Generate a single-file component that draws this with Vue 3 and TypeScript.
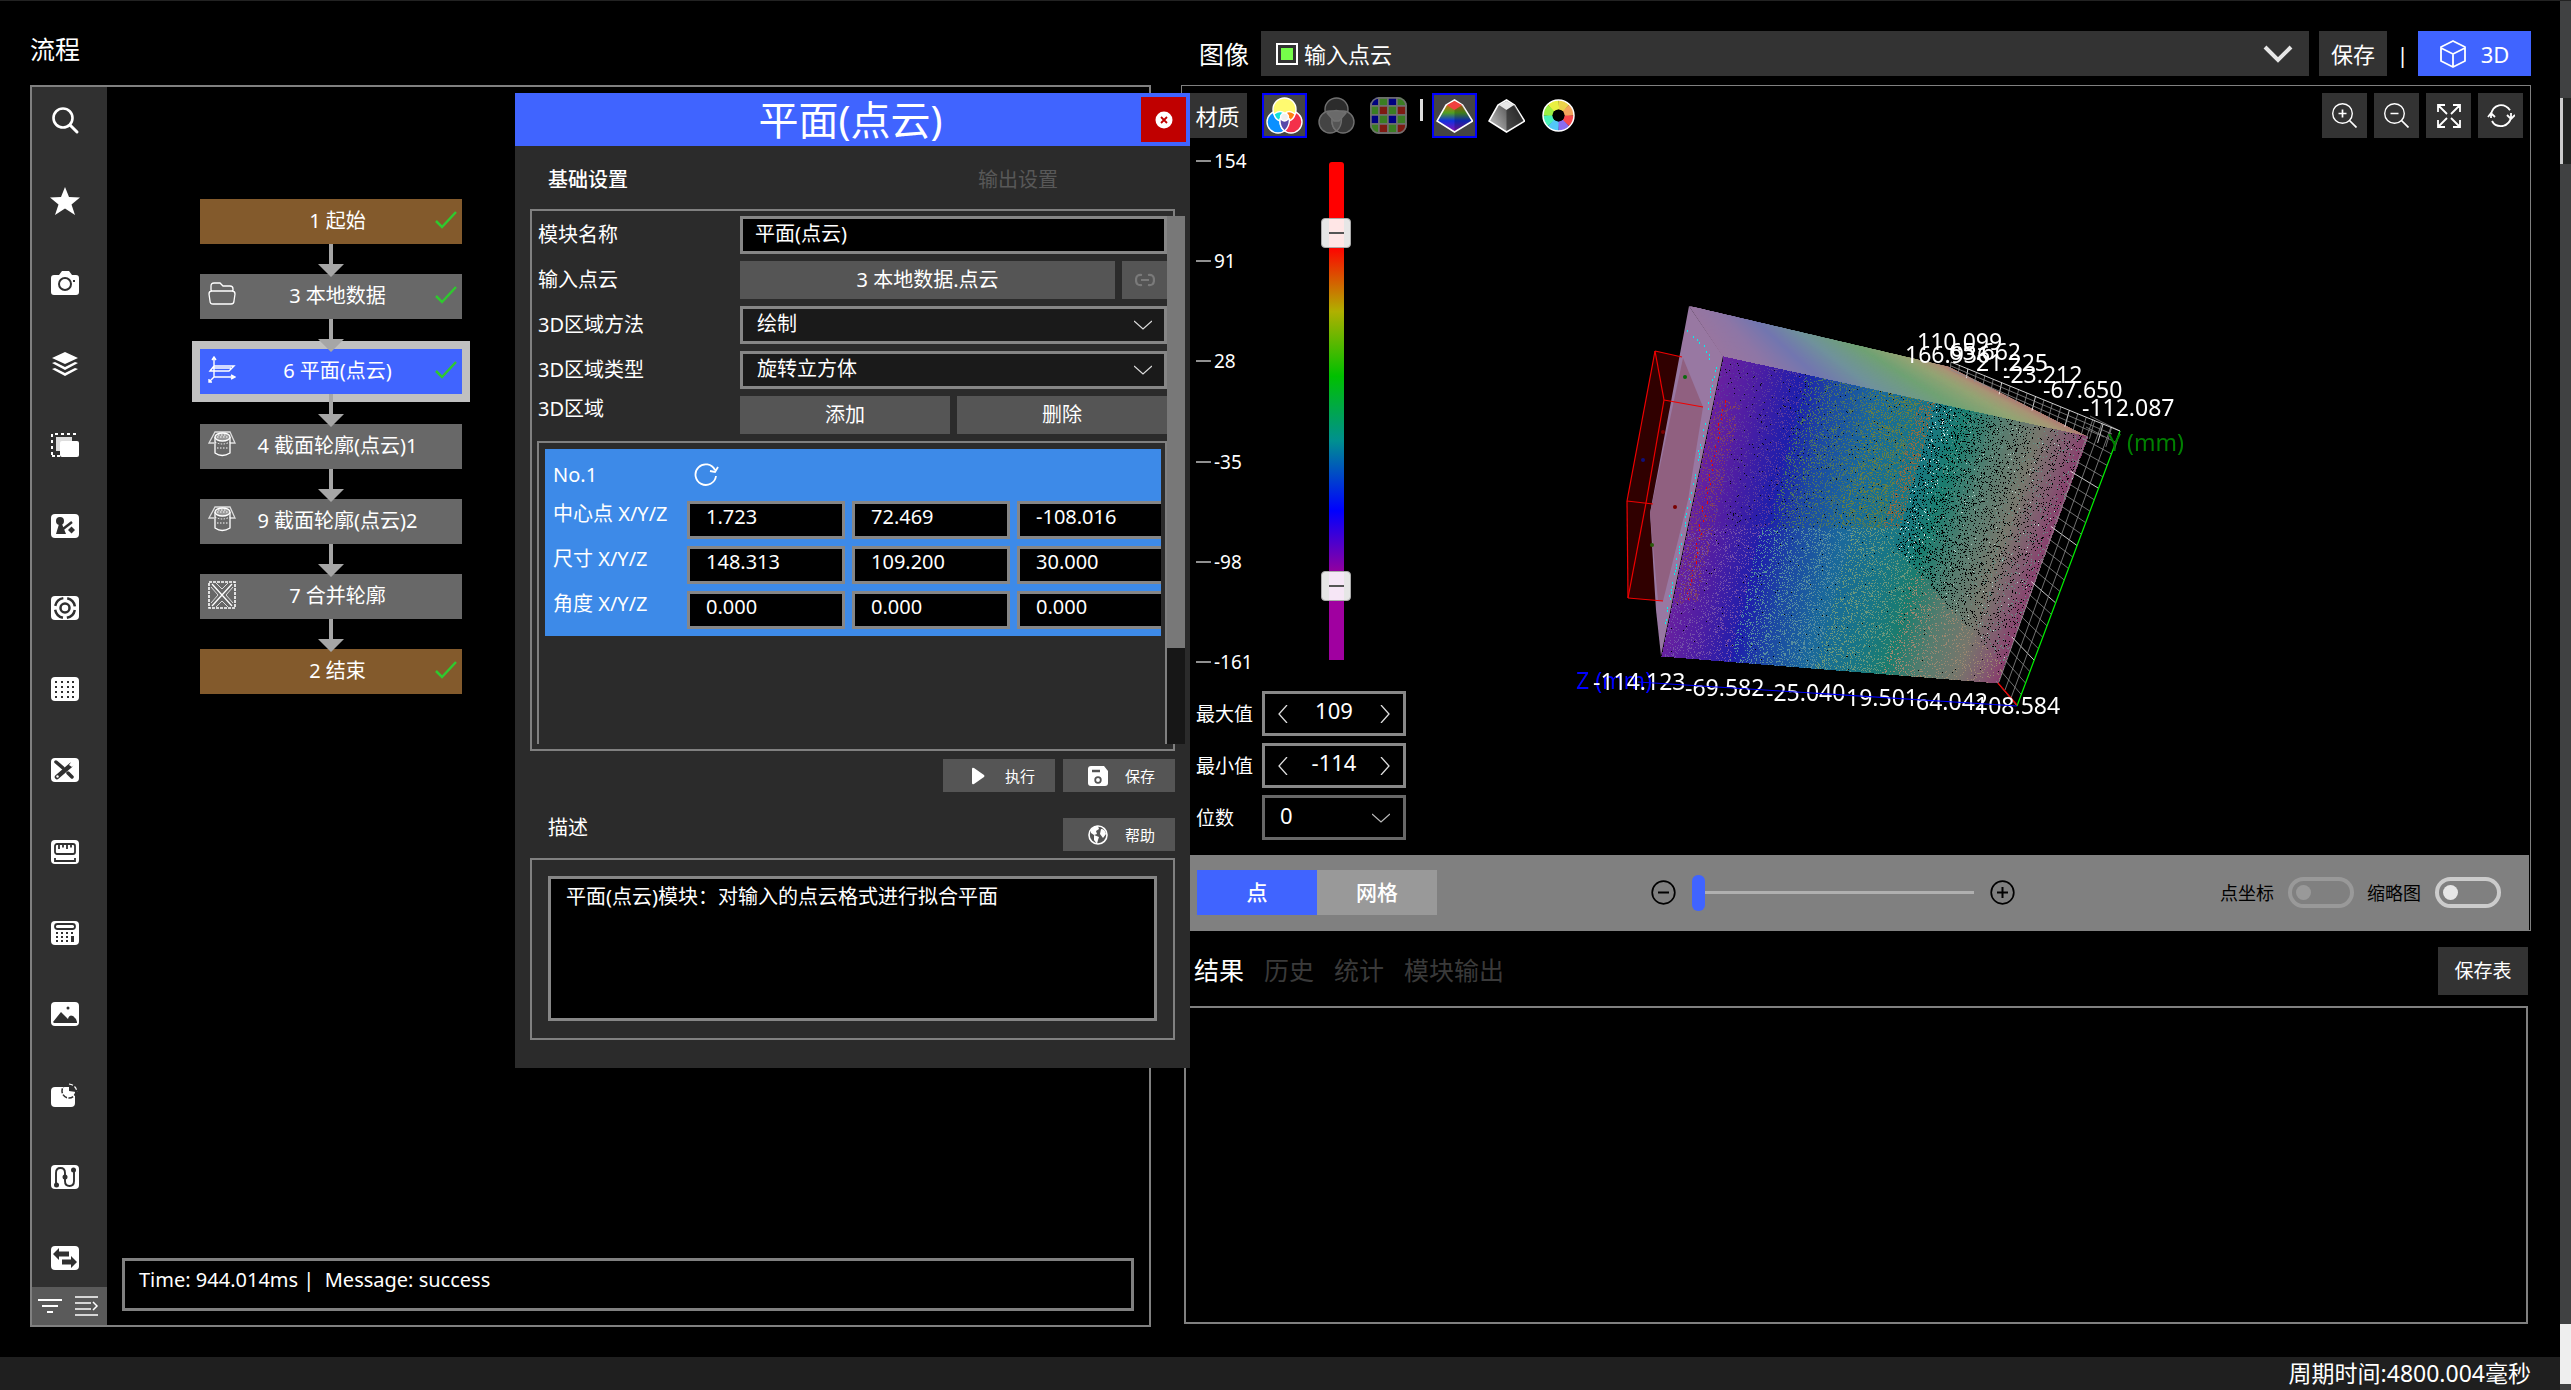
<script setup lang="ts">
import { onMounted, ref } from 'vue'

interface FlowNode {
  label: string
  kind: 'edge' | 'step'
  icon?: 'folder' | 'plane' | 'section' | 'merge'
  done: boolean
  active?: boolean
}

const nodes: FlowNode[] = [
  { label: '1 起始', kind: 'edge', done: true },
  { label: '3 本地数据', kind: 'step', icon: 'folder', done: true },
  { label: '6 平面(点云)', kind: 'step', icon: 'plane', done: true, active: true },
  { label: '4 截面轮廓(点云)1', kind: 'step', icon: 'section', done: false },
  { label: '9 截面轮廓(点云)2', kind: 'step', icon: 'section', done: false },
  { label: '7 合并轮廓', kind: 'step', icon: 'merge', done: false },
  { label: '2 结束', kind: 'edge', done: true },
]

const nodeIcons: Record<string, string> = {
  folder:
    '<path d="M3 10V5q0-3 3-3h6l3 3h7q3 0 3 3v2M4 10h20q3 0 3 3l-1 7q0 3-3 3H5q-3 0-3-3l-1-7q0-3 3-3z" fill="none" stroke="#fff" stroke-width="1.3"/>',
  plane:
    '<path d="M6 1v20h20M6 21l-5 5M4 4l2-3 2 3M23 19l4 2-4 2M1 23v3h3M2 15l4-5h20l-5 5zM4 12h19" fill="none" stroke="#fff" stroke-width="1.4"/>',
  section:
    '<path d="M6 12H1L7 1h15l5 11h-5" fill="none" stroke="#ddd" stroke-width="1.3"/><path d="M7 6v16q7 5 15 0V6" fill="none" stroke="#fff" stroke-width="1.3"/><ellipse cx="14.500" cy="6" rx="7.500" ry="4" fill="#999" stroke="#fff" stroke-width="1.3"/><path d="M9 6h12M10 4h9M7 11q7 4 15 0M9 17h11" fill="none" stroke="#fff" stroke-width="1" stroke-dasharray="1.500 1.500"/>',
  merge:
    '<path d="M1 1h26v26H1z" fill="none" stroke="#fff" stroke-width="1.6" stroke-dasharray="3 1"/><path d="M4 3l20 22M24 3L4 25" fill="none" stroke="#fff" stroke-width="1.3"/><path d="M3 6l7 8-7 8M25 6l-7 8 7 8M8 2l6 6 6-6M8 26l6-6 6 6" fill="none" stroke="#ddd" stroke-width="1"/>',
}

const card = '<rect x="0" y="0" width="28" height="24" rx="4" fill="#fff"/>'
const dots = (xs: number[], ys: number[], size = 2) =>
  ys.map((y) => xs.map((x) => `<rect x="${x}" y="${y}" width="${size}" height="${size}" fill="#303030"/>`).join('')).join('')

const tools: { name: string; art: string }[] = [
  { name: '搜索', art: '<ellipse cx="12" cy="10" rx="9.500" ry="9.500" fill="none" stroke="#fff" stroke-width="2.600"/><path d="M19 17l7 7" stroke="#fff" stroke-width="3" stroke-linecap="round"/>' },
  { name: '收藏', art: '<path d="M14-2l4 10 11 .5-8.500 7L24 26l-10-6.500L4 26l3.500-10.500L-1 8.500 10 8z" fill="#fff"/>' },
  { name: '相机', art: '<path d="M3 4h5l3-4h7l3 4h4q3 0 3 3v14q0 3-3 3H3q-3 0-3-3V7q0-3 3-3z" fill="#fff"/><circle cx="14" cy="13" r="6" fill="none" stroke="#303030" stroke-width="2"/><rect x="22" y="9" width="2" height="2" fill="#303030"/>' },
  { name: '图层', art: '<path d="M14 0l13 6-13 6L1 6zM1 11l3-1 10 5 10-5 3 1-13 7zM1 17l3-1 10 5 10-5 3 1-13 7z" fill="#fff"/>' },
  { name: '区域', art: '<path d="M1 22V1h26" fill="none" stroke="#fff" stroke-width="2" stroke-dasharray="3 3"/><path d="M1 23h8" stroke="#fff" stroke-width="2" stroke-dasharray="3 2"/><rect x="5" y="4" width="16" height="14" fill="#ddd"/><rect x="9" y="8" width="19" height="16" rx="2" fill="#fff"/>' },
  { name: '标记', art: card + '<circle cx="9" cy="7" r="4" fill="#303030"/><path d="M12 15l9-7" fill="none" stroke="#303030" stroke-width="2.500"/><path d="M5 20l3-10h3l4 10z" fill="#303030"/><path d="M20.500 12.500l3.500 3.500-3.500 3.500L17 16z" fill="#303030"/>' },
  { name: '定位', art: card + '<circle cx="14" cy="12" r="4.500" fill="none" stroke="#303030" stroke-width="2.500"/><circle cx="14" cy="12" r="10" fill="none" stroke="#303030" stroke-width="2.500" stroke-dasharray="11.700 4" stroke-dashoffset="-2"/>' },
  { name: '点阵', art: card + dots([4, 10, 16, 21], [4, 9, 14, 19]) },
  { name: '工具', art: card + '<path d="M5 4l7 6M17 15l4 4" stroke="#303030" stroke-width="3.500" stroke-linecap="round"/><path d="M6 19L20 7" stroke="#303030" stroke-width="4.500" stroke-linecap="round"/><path d="M21 3l-3 4 3 2 4-3" fill="#fff"/><circle cx="6.500" cy="18.500" r="1.200" fill="#fff"/>' },
  { name: '测量', art: card + '<rect x="4" y="4" width="20" height="10" rx="2" fill="none" stroke="#303030" stroke-width="1.800"/><path d="M8 4v5M12 4v3.500M16 4v5M20 4v3.500M4 18v3h20v-3" fill="none" stroke="#303030" stroke-width="1.800"/>' },
  { name: '计算', art: card + '<rect x="4" y="3" width="20" height="5" rx="2.500" fill="none" stroke="#303030" stroke-width="1.800"/>' + dots([5, 10, 15, 20], [11, 15, 19]) + '<rect x="20" y="15" width="3" height="6" fill="#303030"/>' },
  { name: '图片', art: card + '<path d="M2 20l8-10 7 7q1-5 5-3 3 2 4 6v1H3z" fill="#303030"/><circle cx="17" cy="6" r="1.500" fill="#303030"/>' },
  { name: '统计', art: '<rect x="0" y="4" width="24" height="20" rx="4" fill="#fff"/><circle cx="18" cy="8" r="7" fill="none" stroke="#303030" stroke-width="1.500" stroke-dasharray="5 1.500"/><path d="M18 8V2q6 0 7 7z" fill="#303030"/><path d="M18 1q7 1 8 8" fill="none" stroke="#fff" stroke-width="1.200" stroke-dasharray="4 2"/>' },
  { name: '流程', art: card + '<path d="M5 20V8q0-5 4.500-5T14 8v8q0 5 4.500 5T23 16V5" fill="none" stroke="#303030" stroke-width="1.900"/><circle cx="5.500" cy="20" r="2.500" fill="#303030"/><circle cx="14" cy="12" r="2.500" fill="#303030"/><circle cx="22.500" cy="5" r="2.500" fill="#303030"/>' },
  { name: '通信', art: card + '<path d="M2 8l6-6v3.500h10v5H8V14zM26 16l-6-6v3.500H11v5h9V22z" fill="#303030"/>' },
]

const moduleName = ref('平面(点云)')
const regionRows = [
  { label: '中心点 X/Y/Z', values: ['1.723', '72.469', '-108.016'] },
  { label: '尺寸 X/Y/Z', values: ['148.313', '109.200', '30.000'] },
  { label: '角度 X/Y/Z', values: ['0.000', '0.000', '0.000'] },
]
const description = ref('平面(点云)模块：对输入的点云格式进行拟合平面')

const ticks = [154, 91, 28, -35, -98, -161]
const maxValue = ref(109)
const minValue = ref(-114)

/* --- 3D scene ------------------------------------------------------- */
type Stop = [number, number, number, number]
const faceStops: Stop[] = [
  [0, 104, 32, 160], [0.1, 76, 30, 164], [0.21, 30, 30, 172], [0.3, 28, 72, 164],
  [0.42, 26, 104, 156], [0.56, 24, 118, 134], [0.66, 26, 124, 110], [0.76, 84, 124, 110],
  [0.87, 118, 118, 108], [0.95, 130, 88, 112], [1, 136, 60, 108],
]
const topStops: Stop[] = [
  [0, 152, 118, 160], [0.12, 142, 118, 166], [0.26, 114, 118, 176], [0.42, 112, 146, 156],
  [0.64, 112, 162, 116], [0.82, 148, 164, 116], [0.93, 168, 150, 118], [1, 176, 124, 116],
]

function pick(stops: Stop[], t: number): number[] {
  const c = Math.min(1, Math.max(0, t))
  let i = 1
  while (i < stops.length - 1 && stops[i][0] < c) i++
  const a = stops[i - 1]
  const b = stops[i]
  const k = (c - a[0]) / (b[0] - a[0])
  return [1, 2, 3].map((n) => Math.round(a[n] + (b[n] - a[n]) * k))
}

let seed = 7
function random(): number {
  seed = (seed * 1664525 + 1013904223) % 4294967296
  return seed / 4294967296
}

const cloud = ref<HTMLCanvasElement | null>(null)

function drawCloud(g: CanvasRenderingContext2D) {
  const lerp = (a: number, b: number, t: number) => a + (b - a) * t
  const poly = (pts: number[][], fill: string) => {
    g.fillStyle = fill
    g.beginPath()
    pts.forEach(([x, y], i) => (i ? g.lineTo(x, y) : g.moveTo(x, y)))
    g.closePath()
    g.fill()
  }
  poly([[95, 71], [122, 77], [90, 233], [98, 321], [68, 318], [67, 221]], '#300000')
  poly([[129, 26], [163, 76], [101, 376], [96, 330], [90, 233]], '#9878a2')
  poly([[123, 78], [143, 127], [128, 220], [103, 321], [98, 321], [90, 233]], '#906080')
  for (let i = 0; i < 260; i++) {
    const u = i / 260
    const w = Math.min(1, (i + 6) / 260)
    poly(
      [
        [lerp(129, 389, u), lerp(26, 87, u)], [lerp(129, 389, w), lerp(26, 87, w)],
        [lerp(163, 528, w), lerp(77, 157, w)], [lerp(163, 528, u), lerp(77, 157, u)],
      ],
      `rgb(${pick(topStops, u)})`,
    )
  }
  for (let y = 76; y < 404; y++) {
    const left = lerp(163, 101, (y - 76) / 300)
    const right = lerp(528, 438, (y - 156) / 247)
    for (let x = Math.ceil(left); x < right; x++) {
      if (y < 76 + ((x - 163) * 80) / 365) continue
      if (y > 376 + ((x - 101) * 27) / 337) continue
      const u = (x - left) / (right - left)
      let c = pick(faceStops, u)
      const r = random()
      const seam = 375 - (y - 123) * 0.28
      const lowLimit = 267 + (x - 335) * 1.1
      if (x > seam && y < lowLimit) {
        const d = 0.14 - 0.09 * Math.max(0, (u - 0.72) / 0.28)
        if (r < d) c = [0, 0, 0]
        else if (x < seam + 26 && r > 0.975) c = [230, 240, 240]
        else if (r > 0.996) c = [190, 220, 210]
        else if (r > 0.96) c = [100, 146, 134]
      } else if (y < 248) {
        const d = 0.05 + 0.26 * Math.min(1, u * 2)
        if (r < d) c = u < 0.22 ? [92, 60, 156] : u < 0.4 ? [78, 118, 96] : u < 0.53 ? [100, 126, 70] : [142, 108, 66]
        else if (r > 0.988) c = [8, 10, 20]
      } else {
        const d = 0.22 * Math.max(0.25, 1 - Math.abs(u - 0.42))
        if (r < d) c = u < 0.2 ? [116, 80, 168] : u < 0.45 ? [88, 142, 158] : u < 0.65 ? [108, 152, 124] : [156, 136, 112]
        else if (r > 0.997) c = [0, 0, 0]
      }
      if (u < 0.07 && y > 120 && y < 324 && r > 0.82) c = [130, 66, 96]
      g.fillStyle = `rgb(${c})`
      g.fillRect(x, y, 1, 1)
    }
  }
  const path = [[126, 50], [142, 65], [154, 87], [145, 137], [120, 260], [102, 348]]
  g.fillStyle = '#00f0f0'
  for (let i = 1; i < path.length; i++) {
    const steps = Math.round(Math.abs(path[i][1] - path[i - 1][1]) / 3)
    for (let k = 0; k < steps; k++) {
      if (random() < 0.6) g.fillRect(Math.round(lerp(path[i - 1][0], path[i][0], k / steps) + random() * 2), Math.round(lerp(path[i - 1][1], path[i][1], k / steps)), 1, 2)
    }
  }
  g.fillStyle = '#f00000'
  for (let k = 0; k < 44; k++) {
    const y = 120 + k * 4.6
    g.fillRect(Math.round(162 - k * 0.85 + random() * 4), Math.round(y), 1, 1 + Math.round(random() * 2))
  }
}

onMounted(() => {
  const g = cloud.value?.getContext('2d')
  if (g) drawCloud(g)
})

interface Line { x1: number; y1: number; x2: number; y2: number; c: string }
const gridLines: Line[] = []
for (let i = 0; i <= 24; i++) {
  const t = i / 24
  const x = 560 - 103 * t
  const y = 151 + 275 * t
  gridLines.push({ x1: x, y1: y, x2: x - 30 + 9 * t, y2: y - 15 - 10 * t, c: i % 5 === 0 && i > 0 ? '#fff' : '#8c8c8c' })
}
for (let k = 1; k <= 3; k++) {
  gridLines.push({ x1: 560 - 9 * k, y1: 151 - 4 * k, x2: 457 - 6 * k, y2: 426 - 8 * k, c: '#8c8c8c' })
}
for (let i = 0; i <= 20; i++) {
  const t = i / 20
  const x = 391 + 169 * t
  const y = 82 + 69 * t
  gridLines.push({ x1: x, y1: y, x2: x - 1 - 5 * t, y2: y + 8 + 12 * t, c: i % 4 === 2 ? '#fff' : '#8c8c8c' })
}
for (let k = 0; k <= 2; k++) {
  gridLines.push({ x1: 391, y1: 82 + 4 * k, x2: 560 - 8 * k, y2: 151 + 3 * k, c: k ? '#8c8c8c' : '#fff' })
}

const redLines = [
  '95,71 122,77', '95,71 104,120', '104,120 143,127', '95,71 67,221', '104,120 86,223',
  '67,221 93,224', '67,221 68,318', '86,223 68,318', '68,318 103,321',
]

const axisLabels = [
  { t: 'Z (mm)', x: 16, y: 409, c: '#0000ff' },
  { t: 'Y (mm)', x: 548, y: 171, c: '#008000' },
  { t: '110.099', x: 357, y: 70, c: '#fff' },
  { t: '166.936', x: 345, y: 83, c: '#fff' },
  { t: '65.662', x: 389, y: 80, c: '#fff' },
  { t: '21.225', x: 416, y: 91, c: '#fff' },
  { t: '-23.212', x: 443, y: 103, c: '#fff' },
  { t: '-67.650', x: 483, y: 118, c: '#fff' },
  { t: '-112.087', x: 522, y: 136, c: '#fff' },
  { t: '-114.123', x: 33, y: 410, c: '#fff' },
  { t: '-69.582', x: 125, y: 416, c: '#fff' },
  { t: '-25.040', x: 206, y: 421, c: '#fff' },
  { t: '19.501', x: 286, y: 426, c: '#fff' },
  { t: '64.042', x: 356, y: 430, c: '#fff' },
  { t: '108.584', x: 415, y: 434, c: '#fff' },
]

const gridColors = ['#000080', '#3b7d23', '#000080', '#3b7d23', '#3b7d23', '#7d1a12', '#3b7d23', '#7d1a12']
const checker = Array.from({ length: 16 }, (_, i) => ({
  x: (i % 4) * 9,
  y: Math.floor(i / 4) * 9,
  c: gridColors[(Math.floor(i / 4) % 2) * 4 + (i % 4)],
}))
const blades = ['#ecd24a', '#f4a55c', '#f8484c', '#8a6cf0', '#52c8f8', '#48f0b8', '#9cf044', '#e8f040']
</script>

<template>
  <div class="app">
    <main class="workspace">
      <section class="flow-col">
        <h2 class="flow-title">流程</h2>
        <div class="flow-panel">
          <nav class="sidebar">
            <div class="tool-list">
              <button v-for="t in tools" :key="t.name" class="tool" type="button" :aria-label="t.name">
                <svg width="28" height="24" viewBox="0 0 28 24" overflow="visible" v-html="t.art"></svg>
              </button>
            </div>
            <div class="side-foot">
              <button type="button" aria-label="筛选">
                <svg width="24" height="20" viewBox="0 0 24 20"><path d="M0 4h24M4 10h16M9 16h6" stroke="#fff" stroke-width="2" /></svg>
              </button>
              <button type="button" aria-label="展开列表">
                <svg width="24" height="20" viewBox="0 0 24 20"><path d="M0 1h23M0 7h16M0 13h16M0 19h23M18 6l4 4-4 4" fill="none" stroke="#fff" stroke-width="1.5" /></svg>
              </button>
            </div>
          </nav>
          <div class="flow-main">
            <ol class="flow-nodes">
              <li v-for="(n, i) in nodes" :key="n.label" class="flow-item">
                <button type="button" class="node" :class="[n.kind, { active: n.active }]">
                  <svg v-if="n.icon" class="node-icon" width="28" height="28" viewBox="0 0 28 28" v-html="nodeIcons[n.icon]"></svg>
                  <span v-else class="node-icon"></span>
                  <span class="node-label">{{ n.label }}</span>
                  <svg class="node-check" width="22" height="20" viewBox="0 0 22 20">
                    <path v-if="n.done" d="M1 11l6 6L21 2" fill="none" stroke="#2fc92f" stroke-width="2.5" />
                  </svg>
                </button>
                <svg v-if="i < nodes.length - 1" class="arrow" width="26" height="33" viewBox="0 0 26 33">
                  <path d="M11 0h4v20h11L13 33 0 20h11z" fill="#a6a6a6" />
                </svg>
              </li>
            </ol>
            <p class="message">Time: 944.014ms |&nbsp; Message: success</p>
          </div>
        </div>
      </section>

      <section class="view-col">
        <header class="view-head">
          <label class="head-label" for="image-source">图像</label>
          <div class="source">
            <span class="swatch"></span>
            <select id="image-source"><option>输入点云</option></select>
            <svg class="source-arrow" width="30" height="18" viewBox="0 0 30 18"><path d="M2 2l13 13L28 2" fill="none" stroke="#e6e6e6" stroke-width="4" /></svg>
          </div>
          <button type="button" class="dark-btn save">保存</button>
          <span class="bar-sep">|</span>
          <button type="button" class="mode-3d">
            <svg width="26" height="28" viewBox="0 0 26 28"><path d="M13 1l12 6v14l-12 6-12-6V7zM1 8l12 6 12-6M13 14v12" fill="none" stroke="#fff" stroke-width="1.8" stroke-linejoin="round" /></svg>
            3D
          </button>
        </header>

        <div class="viewer">
          <div class="toolbar">
            <button type="button" class="dark-btn material">材质</button>
            <div class="mat-group">
              <button type="button" class="mat on" aria-label="彩色">
                <svg width="37" height="37" viewBox="0 0 37 37">
                  <g stroke="#fff" stroke-width="1.4">
                    <circle cx="12" cy="25" r="11" fill="#0a90ff" /><circle cx="25" cy="25" r="11" fill="#f4304a" /><circle cx="18.500" cy="12.500" r="11.500" fill="#fffa70" />
                    <path d="M8 17q7-5 11 0-5 3-5 7-5-2-6-7z" fill="#10e0d8" /><path d="M29 17q-7-5-10 0 4 3 4 7 5-2 6-7z" fill="#ff8010" />
                    <path d="M14 22h9.500q0 8-5 12-5-4-4.500-12z" fill="#5848a8" /><circle cx="18.500" cy="20" r="4" fill="#f0f0f0" />
                  </g>
                </svg>
              </button>
              <button type="button" class="mat" aria-label="灰度">
                <svg width="37" height="37" viewBox="0 0 37 37">
                  <g stroke="#707070" stroke-width="1.4">
                    <circle cx="18.500" cy="12.500" r="11.500" fill="#2c2c2c" /><circle cx="12" cy="25" r="11" fill="#444" /><circle cx="25" cy="25" r="11" fill="#383838" />
                    <path d="M14 22h9.500q0 8-5 12-5-4-4.500-12z" fill="#555" /><path d="M9 16q9-5 19 0l-7 8h-5z" fill="#6a6a6a" />
                  </g>
                </svg>
              </button>
              <button type="button" class="mat" aria-label="棋盘格">
                <svg width="37" height="37" viewBox="0 0 37 37">
                  <defs><clipPath id="tile"><rect width="37" height="37" rx="9" /></clipPath></defs>
                  <g clip-path="url(#tile)"><rect v-for="c in checker" :key="c.x + '-' + c.y" :x="c.x" :y="c.y" width="9" height="9" :fill="c.c" stroke="#707070" stroke-width="1.500" /></g>
                  <rect x="1" y="1" width="35" height="35" rx="8" fill="none" stroke="#707070" stroke-width="1.500" />
                </svg>
              </button>
              <span class="mat-sep"></span>
              <button type="button" class="mat on" aria-label="高度着色">
                <svg width="37" height="34" viewBox="0 0 37 34">
                  <defs><linearGradient id="hue" x1="0" y1="0" x2="0" y2="1"><stop offset="0.1" stop-color="#e06010" /><stop offset="0.400" stop-color="#50a020" /><stop offset="0.650" stop-color="#1030e0" /><stop offset="1" stop-color="#9010b0" /></linearGradient></defs>
                  <path d="M18.500 1l8 5 10 16-18 11L1 22 10 6z" fill="url(#hue)" stroke="#fff" stroke-width="1.600" /><path d="M18.500 2l7.500 4-7.500 5-7.500-5z" fill="#f04040" /><path d="M18.500 11l8-5 9 16-17 10z" fill="#000" opacity=".22" />
                </svg>
              </button>
              <button type="button" class="mat" aria-label="灰度高度">
                <svg width="37" height="34" viewBox="0 0 37 34">
                  <defs><linearGradient id="gray" x1="1" y1="0" x2="0" y2="0.5"><stop offset="0.200" stop-color="#333" /><stop offset="1" stop-color="#aaa" /></linearGradient></defs>
                  <path d="M18.500 1l8 5 10 16-18 11L1 22 10 6z" fill="url(#gray)" stroke="#fff" stroke-width="1.600" /><path d="M18.500 2l7.500 4-7.500 5-7.500-5z" fill="#e8e8e8" /><path d="M18.500 11l8-5 9 16-17 10z" fill="#222" opacity=".6" />
                </svg>
              </button>
              <button type="button" class="mat" aria-label="色环">
                <svg width="33" height="33" viewBox="-16.500 -16.500 33 33">
                  <g><path v-for="(b, i) in blades" :key="b" d="M0-6L0-15.500A15.500 15.500 0 0 1 11-11L5-4z" :fill="b" :transform="`rotate(${i * 45})`" /></g>
                  <circle r="15.500" fill="none" stroke="#fff" stroke-width="1.500" /><circle r="6" fill="#000" />
                </svg>
              </button>
            </div>
            <div class="zoom-group">
              <button type="button" class="dark-btn sq" aria-label="放大"><svg width="25" height="25" viewBox="0 0 25 25"><path d="M17.500 17.500l7 7M6.500 10.500h8M10.500 6.500v8" stroke="#fff" stroke-width="1.700" /><circle cx="10.500" cy="10.500" r="9.800" fill="none" stroke="#fff" stroke-width="1.400" /></svg></button>
              <button type="button" class="dark-btn sq" aria-label="缩小"><svg width="25" height="25" viewBox="0 0 25 25"><path d="M17.500 17.500l7 7M6.500 10.500h8" stroke="#fff" stroke-width="1.700" /><circle cx="10.500" cy="10.500" r="9.800" fill="none" stroke="#fff" stroke-width="1.400" /></svg></button>
              <button type="button" class="dark-btn sq" aria-label="全屏"><svg width="24" height="24" viewBox="0 0 24 24"><path d="M1 8V1h7M1 1l9 9M16 1h7v7M23 1l-9 9M1 16v7h7M1 23l9-9M16 23h7v-7M23 23l-9-9" fill="none" stroke="#fff" stroke-width="1.800" /></svg></button>
              <button type="button" class="dark-btn sq" aria-label="刷新"><svg width="28" height="24" viewBox="0 0 28 24"><path d="M4 14V11Q5 3 12 1.300q7-1 11 5M24 9v4q-1 7-8 9-8 1-11-5M1 13l3-4 4 4M20 11l4 4 4-4" fill="none" stroke="#fff" stroke-width="1.800" /></svg></button>
            </div>
          </div>

          <div class="stage">
            <div class="controls">
              <div class="scale">
                <ul class="ticks">
                  <li v-for="t in ticks" :key="t"><i></i>{{ t }}</li>
                </ul>
                <div class="ramp">
                  <input v-model="maxValue" type="range" min="-161" max="154" aria-label="最大值滑块" />
                  <input v-model="minValue" type="range" min="-161" max="154" aria-label="最小值滑块" />
                </div>
              </div>
              <div class="fields">
                <div class="field">
                  <label for="max-value">最大值</label>
                  <div class="spin">
                    <button type="button" aria-label="减小最大值"><svg width="10" height="18" viewBox="0 0 10 18"><path d="M9 0L1 9l8 9" fill="none" stroke="#ddd" stroke-width="1.300" /></svg></button>
                    <input id="max-value" v-model="maxValue" type="text" />
                    <button type="button" aria-label="增大最大值"><svg width="10" height="18" viewBox="0 0 10 18"><path d="M1 0l8 9-8 9" fill="none" stroke="#ddd" stroke-width="1.300" /></svg></button>
                  </div>
                </div>
                <div class="field">
                  <label for="min-value">最小值</label>
                  <div class="spin">
                    <button type="button" aria-label="减小最小值"><svg width="10" height="18" viewBox="0 0 10 18"><path d="M9 0L1 9l8 9" fill="none" stroke="#ddd" stroke-width="1.300" /></svg></button>
                    <input id="min-value" v-model="minValue" type="text" />
                    <button type="button" aria-label="增大最小值"><svg width="10" height="18" viewBox="0 0 10 18"><path d="M1 0l8 9-8 9" fill="none" stroke="#ddd" stroke-width="1.300" /></svg></button>
                  </div>
                </div>
                <div class="field">
                  <label for="digits">位数</label>
                  <div class="spin digits">
                    <select id="digits"><option>0</option></select>
                    <svg width="18" height="10" viewBox="0 0 18 10"><path d="M0 1l9 8 9-8" fill="none" stroke="#bbb" stroke-width="1.300" /></svg>
                  </div>
                </div>
              </div>
            </div>
            <div class="scene">
              <canvas ref="cloud" width="660" height="460"></canvas>
              <svg width="660" height="460" viewBox="0 0 660 460">
                <line v-for="(l, i) in gridLines" :key="i" :x1="l.x1" :y1="l.y1" :x2="l.x2" :y2="l.y2" :stroke="l.c" stroke-width="0.800" />
                <path d="M560 151L457 426" stroke="#00f000" stroke-width="1.200" />
                <path d="M438 403l19 22" stroke="#f00000" stroke-width="1.200" />
                <polyline v-for="p in redLines" :key="p" :points="p" stroke="#f00000" stroke-width="1.200" fill="none" />
                <circle cx="125" cy="97" r="2" fill="#0a6a0a" /><circle cx="103" cy="152" r="2" fill="#7a0000" /><circle cx="83" cy="180" r="2" fill="#10107a" />
                <circle cx="115" cy="227" r="2" fill="#7a0000" /><circle cx="92" cy="265" r="2" fill="#2a5a0a" />
                <text v-for="a in axisLabels" :key="a.t" :x="a.x" :y="a.y" :fill="a.c" font-size="23">{{ a.t }}</text>
                <path d="M78 402L457 426" stroke="#0000ff" stroke-width="1.200" />
              </svg>
            </div>
          </div>

          <div class="view-bar">
            <div class="seg">
              <button type="button" class="on">点</button>
              <button type="button">网格</button>
            </div>
            <div class="size">
              <button type="button" aria-label="减小点"><svg width="25" height="25" viewBox="0 0 25 25"><circle cx="12.500" cy="12.500" r="11.300" fill="none" stroke="#000" stroke-width="1.700" /><path d="M7 12.500h11" stroke="#000" stroke-width="2" /></svg></button>
              <input type="range" min="0" max="100" value="0" aria-label="点大小" />
              <button type="button" aria-label="增大点"><svg width="25" height="25" viewBox="0 0 25 25"><circle cx="12.500" cy="12.500" r="11.300" fill="none" stroke="#000" stroke-width="1.700" /><path d="M7 12.500h11M12.500 7v11" stroke="#000" stroke-width="2" /></svg></button>
            </div>
            <div class="switches">
              <label>点坐标<input type="checkbox" role="switch" disabled /></label>
              <label>缩略图<input type="checkbox" role="switch" /></label>
            </div>
          </div>
        </div>

        <div class="result-head">
          <div class="result-tabs">
            <button type="button" class="on">结果</button>
            <button type="button">历史</button>
            <button type="button">统计</button>
            <button type="button">模块输出</button>
          </div>
          <button type="button" class="dark-btn save-table">保存表</button>
        </div>
        <div class="result-box"></div>
      </section>
    </main>

    <footer class="status">周期时间:4800.004毫秒</footer>

    <section class="dialog" role="dialog" aria-labelledby="dialog-title">
      <header class="dialog-head">
        <h1 id="dialog-title">平面(点云)</h1>
        <button type="button" aria-label="关闭">
          <svg width="18" height="18" viewBox="0 0 18 18"><circle cx="9" cy="9" r="8.500" fill="#fff" /><path d="M6 6l6 6M12 6l-6 6" stroke="#c00000" stroke-width="1.800" /></svg>
        </button>
      </header>
      <div class="dialog-tabs">
        <button type="button" class="on">基础设置</button>
        <button type="button">输出设置</button>
      </div>
      <div class="settings">
        <div class="scroll-body">
          <div class="row">
            <label for="module-name">模块名称</label>
            <input id="module-name" v-model="moduleName" type="text" class="box" />
          </div>
          <div class="row">
            <span>输入点云</span>
            <button type="button" class="gray-btn">3 本地数据.点云</button>
            <button type="button" class="gray-btn link" aria-label="链接">
              <svg width="20" height="14" viewBox="0 0 20 14"><path d="M7 2q-6-1-6 5t6 5M13 2q6-1 6 5t-6 5M6 7h8" fill="none" stroke="#7a7a7a" stroke-width="2.200" /></svg>
            </button>
          </div>
          <div class="row">
            <label for="region-method">3D区域方法</label>
            <div class="box pick">
              <select id="region-method"><option>绘制</option></select>
              <svg width="18" height="10" viewBox="0 0 18 10"><path d="M0 1l9 8 9-8" fill="none" stroke="#ddd" stroke-width="1.300" /></svg>
            </div>
          </div>
          <div class="row">
            <label for="region-type">3D区域类型</label>
            <div class="box pick">
              <select id="region-type"><option>旋转立方体</option></select>
              <svg width="18" height="10" viewBox="0 0 18 10"><path d="M0 1l9 8 9-8" fill="none" stroke="#ddd" stroke-width="1.300" /></svg>
            </div>
          </div>
          <div class="row short">
            <span>3D区域</span>
            <button type="button" class="gray-btn">添加</button>
            <button type="button" class="gray-btn">删除</button>
          </div>
          <div class="regions">
            <div class="region">
              <div class="region-head">
                <span>No.1</span>
                <button type="button" aria-label="重置区域">
                  <svg width="25" height="24" viewBox="0 0 25 24"><path d="M22 13A10.300 10.300 0 1 1 21 7M16 8l5 1 3-5" fill="none" stroke="#fff" stroke-width="1.800" /></svg>
                </button>
              </div>
              <div v-for="r in regionRows" :key="r.label" class="region-row">
                <span>{{ r.label }}</span>
                <input v-for="(v, i) in r.values" :key="i" type="text" class="box" :value="v" :aria-label="r.label + ' ' + 'XYZ'[i]" />
              </div>
            </div>
          </div>
        </div>
        <div class="scrollbar"><i></i></div>
      </div>
      <div class="actions">
        <button type="button" class="gray-btn">
          <svg width="20" height="18" viewBox="0 0 20 18"><path d="M4 2q0-2 2-1l10 7q1 1 0 2L6 17q-2 1-2-1z" fill="#fff" /></svg>执行
        </button>
        <button type="button" class="gray-btn">
          <svg width="20" height="20" viewBox="0 0 20 20"><path d="M3 0h13l4 5v12q0 3-3 3H3q-3 0-3-3V3q0-3 3-3z" fill="#fff" /><path d="M4 5h8" stroke="#555" stroke-width="2.500" /><circle cx="10" cy="14" r="2.800" fill="none" stroke="#555" stroke-width="1.800" /></svg>保存
        </button>
      </div>
      <div class="desc-head">
        <label for="description">描述</label>
        <button type="button" class="gray-btn">
          <svg width="20" height="20" viewBox="0 0 20 20"><circle cx="10" cy="10" r="9" fill="none" stroke="#fff" stroke-width="1.600" /><path d="M3 5q4-5 7-4l1 3-3 2 1 3-3 1-3-2zM6 10l5 2-1 3-1 4-3-4zM13 4q4 0 5 5l-3 4-3-4z" fill="#fff" /></svg>帮助
        </button>
      </div>
      <div class="desc">
        <textarea id="description" v-model="description" class="box"></textarea>
      </div>
    </section>

    <div class="page-scroll"><i></i><b></b></div>
  </div>
</template>

<style>
body {
  background: #000;
}
</style>

<style scoped>
.app {
  position: relative;
  display: flex;
  flex-direction: column;
  min-height: 100vh;
  box-sizing: border-box;
  border-top: 1px solid #222;
  padding-right: 11px;
  background: #000;
  color: #fff;
  font-family: "Noto Sans", "Noto Sans CJK SC", sans-serif;
  font-size: 20px;
  line-height: 28px;
}
.app *,
.app *::before {
  box-sizing: border-box;
}
button,
input,
select,
textarea {
  margin: 0;
  padding: 0;
  border: 0;
  border-radius: 0;
  background: none;
  color: inherit;
  font: inherit;
  outline: none;
}
select {
  appearance: none;
}
h1,
h2,
p,
ol,
ul {
  margin: 0;
  padding: 0;
  font-weight: 400;
  list-style: none;
}
svg {
  display: block;
  flex: none;
}
.workspace {
  flex: 1;
  display: flex;
  gap: 30px;
  padding: 30px 29px 30px 30px;
}
.flow-col {
  flex: 1121 1 0;
  min-width: 0;
  display: flex;
  flex-direction: column;
}
.flow-title {
  height: 54px;
  font-size: 25px;
  line-height: 36px;
}
.flow-panel {
  flex: 1;
  display: flex;
  border: 2px solid #808080;
}
.sidebar {
  width: 75px;
  display: flex;
  flex-direction: column;
  background: #303030;
}
.tool-list {
  flex: 1;
  display: flex;
  flex-direction: column;
  justify-content: space-between;
  align-items: center;
  padding: 21px 9px 17px 0;
}
.side-foot {
  height: 38px;
  display: flex;
  justify-content: space-between;
  align-items: center;
  padding: 0 8px 0 6px;
  background: #5a5a5a;
}
.flow-main {
  flex: 1;
  display: flex;
  flex-direction: column;
  justify-content: space-between;
  padding: 112px 15px 14px 15px;
}
.flow-nodes {
  width: 262px;
  margin-left: 78px;
}
.flow-item {
  display: flex;
  flex-direction: column;
  align-items: center;
}
.node {
  width: 100%;
  height: 45px;
  display: flex;
  align-items: center;
  padding: 0 5px 4px 8px;
  background: #686868;
}
.node.edge {
  background: #835a2c;
}
.node.active {
  background: #4064ff;
  outline: 8px solid #c0c0c0;
}
.node-icon {
  width: 28px;
}
.node-label {
  flex: 1;
  padding: 3px 0 0 4px;
  font-size: 20px;
  white-space: nowrap;
}
.arrow {
  position: relative;
  z-index: 1;
  margin-bottom: -3px;
}
.message {
  height: 53px;
  padding: 5px 14px;
  border: 3px solid #808080;
  font-size: 20px;
}
.view-col {
  flex: 1350 1 0;
  min-width: 0;
  display: flex;
  flex-direction: column;
  padding-bottom: 3px;
}
.view-head {
  height: 45px;
  display: flex;
  align-items: center;
  margin-bottom: 9px;
  padding-left: 18px;
  font-size: 22px;
}
.head-label {
  width: 62px;
  font-size: 25px;
}
.source {
  flex: 1;
  height: 45px;
  display: flex;
  align-items: center;
  padding: 0 16px 0 15px;
  background: #333;
}
.swatch {
  width: 22px;
  height: 22px;
  border: 2px solid #fff;
  padding: 3px;
  background: #76ff4a content-box;
}
.source select {
  flex: 1;
  height: 45px;
  margin-left: 6px;
}
.dark-btn {
  background: #333;
  font-size: 22px;
}
.save {
  width: 68px;
  height: 45px;
  margin-left: 10px;
}
.bar-sep {
  width: 31px;
  text-align: center;
}
.mode-3d {
  width: 113px;
  height: 45px;
  display: flex;
  justify-content: center;
  align-items: center;
  gap: 15px;
  background: #4064ff;
}
.viewer {
  display: flex;
  flex-direction: column;
  border: 1px solid #808080;
}
.toolbar {
  display: flex;
  align-items: center;
  padding: 7px 7px 0 6px;
}
.material {
  width: 59px;
  height: 45px;
}
.mat-group,
.zoom-group {
  display: flex;
  gap: 7px;
}
.mat-group {
  flex: 1;
  margin-left: 15px;
}
.mat,
.sq {
  width: 45px;
  height: 45px;
  display: flex;
  justify-content: center;
  align-items: center;
}
.mat.on {
  border: 2px solid #0000ff;
  background: #444;
}
.mat-sep {
  width: 3px;
  height: 22px;
  margin: 6px 2px;
  background: #ddd;
}
.stage {
  display: flex;
  padding: 13px 0 15px 14px;
}
.controls {
  width: 210px;
}
.scale {
  height: 521px;
  display: flex;
}
.ticks {
  width: 133px;
  display: flex;
  flex-direction: column;
  justify-content: space-between;
}
.ticks li {
  display: flex;
  align-items: center;
  gap: 3px;
  font-size: 19px;
  line-height: 20px;
}
.ticks i {
  width: 15px;
  height: 2px;
  background: #909090;
}
.ramp {
  position: relative;
  width: 15px;
  margin: 11px 0 12px;
  border-radius: 3px 3px 0 0;
  background: linear-gradient(#ff0000 0 15%, #ff0000 17%, #b0b000 30%, #00c000 43%, #009090 56%, #0000ff 70%, #9000a0 82%, #a000a0 85%);
}
.ramp input {
  position: absolute;
  top: -15px;
  left: -8px;
  width: 30px;
  height: calc(100% + 30px);
  appearance: none;
  writing-mode: vertical-lr;
  direction: rtl;
  pointer-events: none;
}
.ramp input::-webkit-slider-thumb {
  appearance: none;
  width: 30px;
  height: 30px;
  border: 1px solid #aaa;
  border-radius: 4px;
  background: linear-gradient(#555, #555) center / 15px 2px no-repeat rgba(255, 255, 255, 0.9);
  pointer-events: auto;
}
.fields {
  display: flex;
  flex-direction: column;
  gap: 7px;
  margin-top: 19px;
}
.field {
  display: flex;
  align-items: center;
}
.field label {
  width: 66px;
  font-size: 19px;
}
.spin {
  width: 144px;
  height: 45px;
  display: flex;
  align-items: center;
  padding: 0 13px;
  border: 3px solid #888;
  font-size: 22px;
}
.spin input {
  flex: 1;
  min-width: 0;
  height: 39px;
  padding-bottom: 7px;
  text-align: center;
}
.digits {
  border-color: #686868;
}
.digits select {
  flex: 1;
  padding: 0 0 5px 2px;
}
.scene {
  position: relative;
  width: 660px;
  height: 460px;
  margin: 129px 0 0 154px;
}
.scene canvas,
.scene svg {
  position: absolute;
  top: 0;
  left: 0;
}
.view-bar {
  height: 75px;
  display: flex;
  align-items: center;
  justify-content: space-between;
  margin-right: 1px;
  padding: 0 28px 0 15px;
  background: #808080;
}
.seg {
  display: flex;
}
.seg button {
  width: 120px;
  height: 45px;
  padding-bottom: 2px;
  background: #999;
  font-size: 21px;
  font-weight: 500;
}
.seg .on {
  background: #4064ff;
}
.size {
  display: flex;
  align-items: center;
  gap: 16px;
  margin-left: 9px;
}
.size input {
  width: 282px;
  height: 36px;
  appearance: none;
  background: linear-gradient(#b0b0b0, #b0b0b0) center / 100% 3px no-repeat;
}
.size input::-webkit-slider-thumb {
  appearance: none;
  width: 13px;
  height: 36px;
  border-radius: 6px;
  background: #4064ff;
}
.switches {
  display: flex;
  gap: 13px;
  color: #000;
  font-size: 18px;
}
.switches label {
  display: flex;
  align-items: center;
  gap: 14px;
}
.switches input {
  width: 66px;
  height: 31px;
  appearance: none;
  padding: 4px;
  border: 4px solid #ccc;
  border-radius: 16px;
}
.switches input::before {
  content: "";
  display: block;
  width: 15px;
  height: 15px;
  border-radius: 50%;
  background: #e6e6e6;
}
.switches input:disabled {
  border-color: #999;
}
.switches input:disabled::before {
  background: #999;
}
.result-head {
  height: 75px;
  display: flex;
  justify-content: space-between;
  align-items: center;
  padding: 5px 3px 0 13px;
}
.result-tabs {
  display: flex;
  gap: 20px;
  padding-bottom: 2px;
  font-size: 25px;
}
.result-tabs button {
  color: #3a3a3a;
}
.result-tabs .on {
  color: #fff;
}
.save-table {
  width: 90px;
  height: 48px;
  font-size: 19px;
}
.result-box {
  flex: 1;
  margin: 0 3px;
  border: 2px solid #808080;
}
.status {
  height: 33px;
  padding-right: 29px;
  background: #1f1f1f;
  font-size: 23px;
  line-height: 32px;
  text-align: right;
}
.page-scroll {
  position: absolute;
  top: 0;
  right: 0;
  bottom: 0;
  width: 11px;
  display: flex;
  flex-direction: column;
  justify-content: space-between;
  padding: 97px 0 6px;
  background: #404142;
}
.page-scroll i {
  height: 66px;
  border-left: 3px solid #ccc;
  background: #222423;
}
.page-scroll b {
  height: 60px;
  background: #eee;
}

/* module settings window, floating over the workspace */
.dialog {
  position: absolute;
  top: 92px;
  left: 515px;
  width: 675px;
  padding-bottom: 28px;
  background: #2b2b2b;
}
.dialog-head {
  height: 53px;
  display: flex;
  align-items: center;
  padding: 0 4px 0 45px;
  background: #4064ff;
}
.dialog-head h1 {
  flex: 1;
  font-size: 40px;
  line-height: 48px;
  text-align: center;
}
.dialog-head button {
  width: 45px;
  height: 45px;
  display: flex;
  justify-content: center;
  align-items: center;
  background: #c00000;
}
.dialog-tabs {
  height: 63px;
  display: flex;
  align-items: center;
  padding: 4px 132px 0 33px;
  justify-content: space-between;
  color: #585858;
}
.dialog-tabs .on {
  color: #fff;
  font-weight: 500;
}
.settings {
  position: relative;
  height: 542px;
  margin: 0 15px;
  padding: 5px 6px;
  border: 2px solid #808080;
}
.scroll-body {
  height: 528px;
  overflow: hidden;
  margin-left: -1px;
}
.scrollbar {
  position: absolute;
  top: 5px;
  right: -12px;
  bottom: 5px;
  width: 18px;
  background: #171717;
}
.scrollbar i {
  display: block;
  height: 432px;
  background: #787878;
}
.row {
  height: 38px;
  display: flex;
  align-items: center;
  gap: 7px;
  margin-bottom: 7px;
  padding-left: 1px;
}
.row > :first-child {
  width: 195px;
  flex: none;
}
.row.short > :first-child {
  padding-bottom: 12px;
}
.box {
  height: 38px;
  border: 3px solid #868686;
  background: #000;
}
.row .box {
  flex: 1;
  min-width: 0;
}
.row input.box {
  padding: 0 0 5px 12px;
}
.pick {
  display: flex;
  align-items: center;
  padding: 0 12px 0 14px;
  background: #1a1a1a;
}
.pick select {
  flex: 1;
  padding-bottom: 3px;
}
.gray-btn {
  height: 38px;
  display: flex;
  flex: 1;
  justify-content: center;
  align-items: center;
  background: #555;
}
.row .link {
  flex: none;
  width: 45px;
}
.regions {
  height: 320px;
  padding: 6px 4px 6px 6px;
  border: 2px solid #808080;
}
.region {
  height: 187px;
  overflow: hidden;
  padding: 7px 0 7px 8px;
  background: #3d8ae8;
}
.region-head {
  height: 45px;
  display: flex;
  align-items: center;
  padding-bottom: 8px;
}
.region-head span {
  width: 141px;
}
.region-row {
  display: flex;
  gap: 7px;
  margin-bottom: 7px;
  line-height: 26px;
}
.region-row span {
  width: 127px;
  flex: none;
}
.region-row .box {
  width: 158px;
  flex: none;
  padding: 0 0 7px 16px;
}
.actions {
  display: flex;
  justify-content: flex-end;
  gap: 8px;
  margin: 8px 15px 0;
}
.actions .gray-btn,
.desc-head .gray-btn {
  flex: none;
  width: 112px;
  height: 33px;
  gap: 17px;
  padding-left: 5px;
  font-size: 15px;
}
.desc-head {
  display: flex;
  justify-content: space-between;
  margin: 26px 15px 7px 33px;
}
.desc-head label {
  margin-top: -4px;
}
.desc {
  height: 182px;
  margin: 0 15px;
  padding: 16px;
  border: 2px solid #808080;
}
.desc .box {
  display: block;
  width: 100%;
  height: 145px;
  padding: 4px 15px;
  resize: none;
}
</style>
